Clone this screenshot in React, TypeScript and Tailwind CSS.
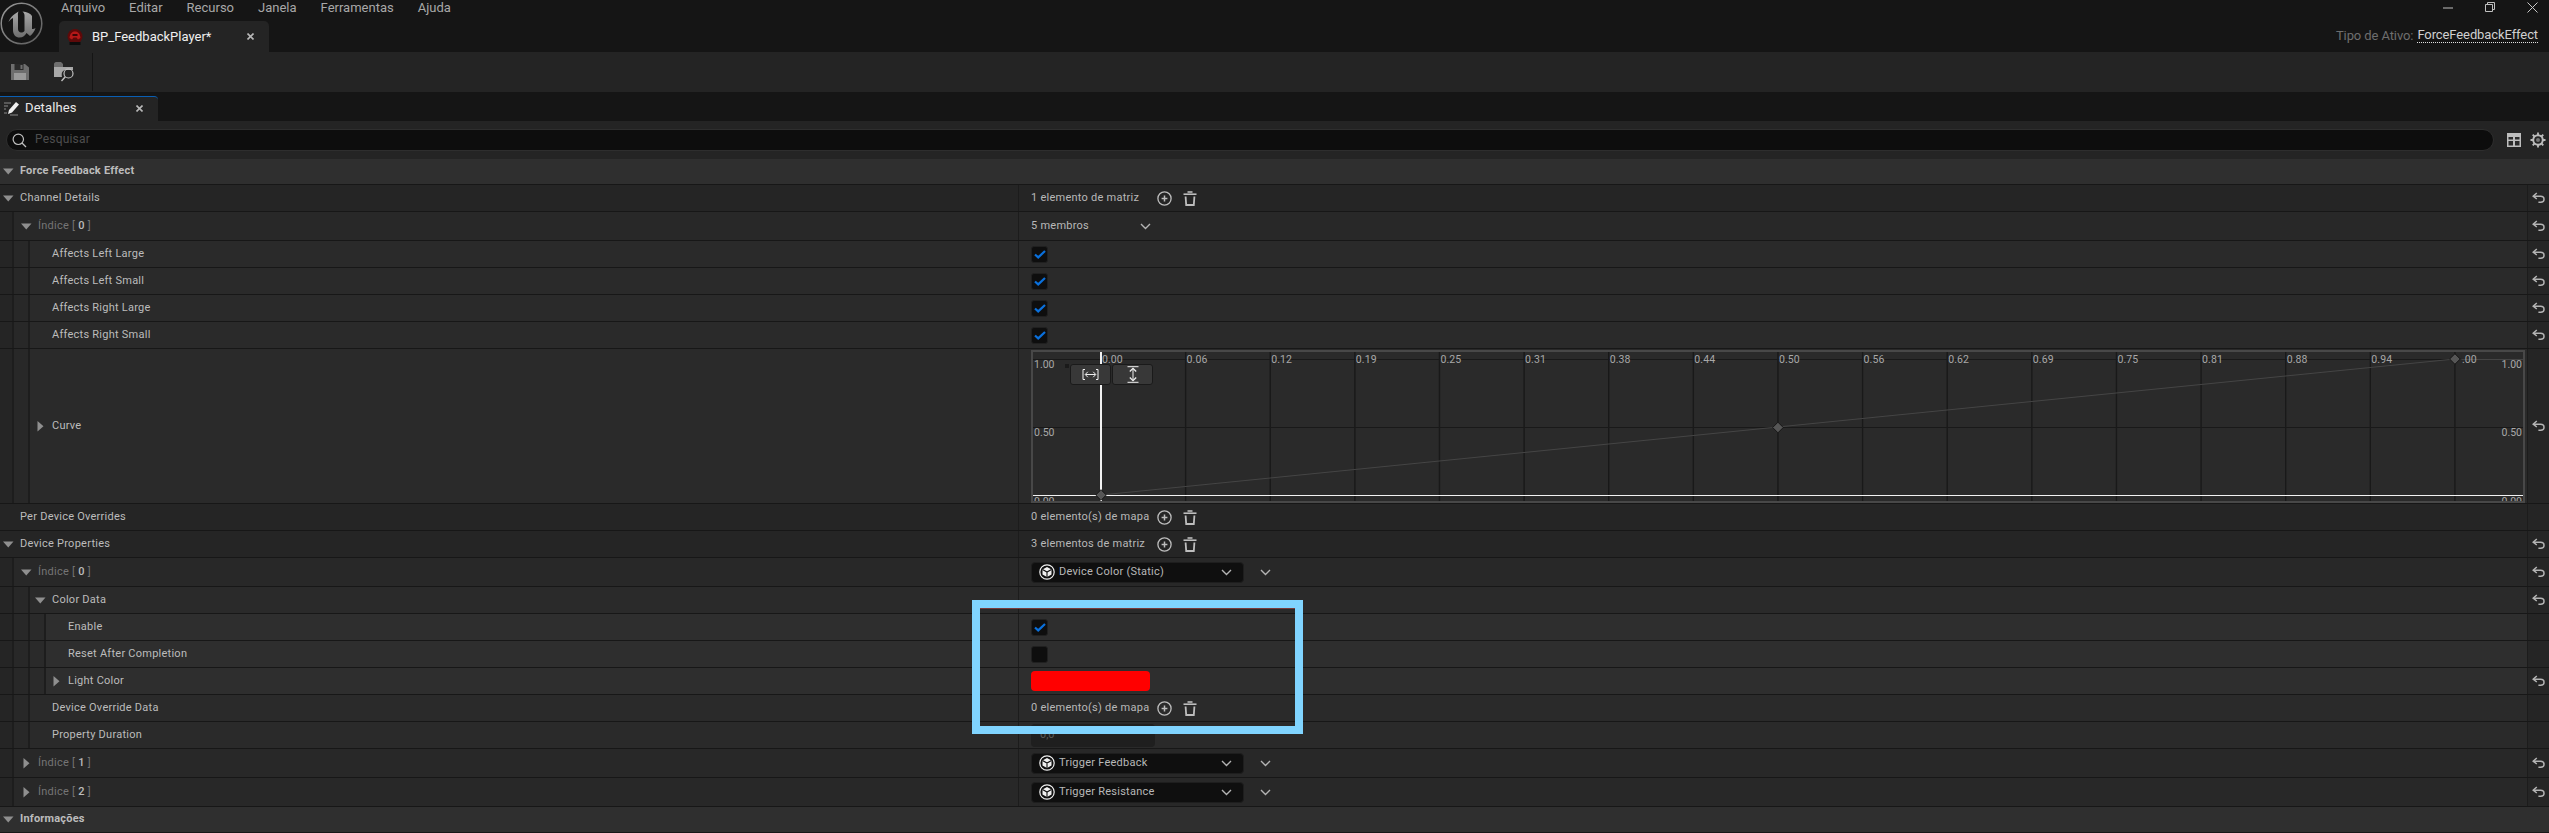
import React from "react";

const FONT = "font-['Roboto','Liberation_Sans',sans-serif]";

function Undo() {
  return (
    <svg width="13" height="12" viewBox="0 0 13 12" fill="none" stroke="#b4b4b4" strokeWidth="1.5">
      <path d="M4.8 1 L1.2 4.2 L4.8 7" />
      <path d="M1.6 4.2 H8.6 C10.6 4.2 12 5.4 12 7.2 C12 9 10.6 10.2 8.6 10.2 H6.4" />
    </svg>
  );
}
function PlusCircle() {
  return (
    <svg width="15" height="15" viewBox="0 0 15 15" fill="none" stroke="#bdbdbd">
      <circle cx="7.5" cy="7.5" r="6.6" strokeWidth="1.3" />
      <path d="M7.5 4.6 V10.4 M4.6 7.5 H10.4" strokeWidth="1.5" />
    </svg>
  );
}
function Trash() {
  return (
    <svg width="14" height="15" viewBox="0 0 14 15" fill="none" stroke="#bdbdbd" strokeWidth="1.6">
      <path d="M0.5 3.2 H13.5" />
      <path d="M4.5 1 H9.5" />
      <path d="M2.6 5.5 L3.2 14 H10.8 L11.4 5.5" strokeWidth="1.8" />
    </svg>
  );
}
function Chevron() {
  return (
    <svg width="11" height="7" viewBox="0 0 11 7" fill="none" stroke="#b4b4b4" strokeWidth="1.4">
      <path d="M1 1 L5.5 5.5 L10 1" />
    </svg>
  );
}
function TriDown() {
  return (
    <svg width="11" height="7" viewBox="0 0 11 7"><path d="M0 0.5 H10.5 L5.25 6.5 Z" fill="#8f8f8f" /></svg>
  );
}
function TriRight() {
  return (
    <svg width="7" height="11" viewBox="0 0 7 11"><path d="M0.5 0 V10.5 L6.5 5.25 Z" fill="#8f8f8f" /></svg>
  );
}
function Check({ on }: { on: boolean }) {
  return (
    <div className="w-[17px] h-[17px] rounded-[3px] bg-[#0e0e0e] border border-[#202020] flex items-center justify-center">
      {on && (
        <svg width="12" height="9" viewBox="0 0 12 9" fill="none" stroke="#0a70dc" strokeWidth="2.2">
          <path d="M1 4.5 L4.2 7.4 L11 1" />
        </svg>
      )}
    </div>
  );
}
function Count({ text }: { text: string }) {
  return (
    <div className="flex items-center h-full">
      <span className="w-[126px] text-[11px] tracking-[0.25px] text-[#b8b8b8]">{text}</span>
      <PlusCircle />
      <span className="w-[11px]" />
      <Trash />
    </div>
  );
}
function Cube() {
  return (
    <svg width="16" height="16" viewBox="0 0 16 16" fill="none" stroke="#f0f0f0">
      <circle cx="8" cy="8" r="7.2" strokeWidth="1.2" />
      <path d="M8 3 L12.5 5.4 V10.4 L8 13 L3.5 10.4 V5.4 Z" fill="#f0f0f0" stroke="none" />
      <path d="M3.5 5.4 L8 8 L12.5 5.4 M8 8 V13" stroke="#0f0f0f" strokeWidth="1.1" />
    </svg>
  );
}
function Dropdown({ text }: { text: string }) {
  return (
    <div className="flex items-center">
      <div className="w-[213px] h-[21px] rounded-[4px] bg-[#0f0f0f] border border-[#1e1e1e] flex items-center pl-[7px] pr-[11px]">
        <Cube />
        <span className="ml-[4px] flex-1 text-[11px] tracking-[0.25px] text-[#b8b8b8]">{text}</span>
        <Chevron />
      </div>
      <span className="ml-[16px]">
        <Chevron />
      </span>
    </div>
  );
}

function Curve() {
  const labels = ["0.00","0.06","0.12","0.19","0.25","0.31","0.38","0.44","0.50","0.56","0.62","0.69","0.75","0.81","0.88","0.94","1.00"];
  const x0 = 68;
  const step = 84.62;
  const L = 10.5;
  return (
    <div className="relative w-[1494px] h-[153px] border-2 border-[#484848] overflow-hidden">
      <svg width="1490" height="149" className="block">
        <g stroke="#191919">
          {labels.slice(1).map((l, i) => (
            <line key={l} x1={x0 + (i + 1) * step} y1="0" x2={x0 + (i + 1) * step} y2="149" strokeWidth="1.4" />
          ))}
          <line x1="0" y1="7.5" x2="1490" y2="7.5" />
          <line x1="0" y1="75.5" x2="1490" y2="75.5" />
        </g>
        <line x1={x0} y1="143" x2={x0 + 16 * step} y2="7" stroke="#454545" strokeWidth="1" />
        <line x1="1422" y1="7.5" x2="1490" y2="7.5" stroke="#454545" />
        <line x1="0" y1="143.5" x2="1490" y2="143.5" stroke="#f2f2f2" />
        <line x1={x0} y1="0" x2={x0} y2="149" stroke="#f2f2f2" strokeWidth="2" />
        <g fontFamily="Roboto" fontSize={L} fill="#a8a8a8">
          {labels.map((l, i) => (
            <text key={l} x={x0 + i * step + 1} y="10.5" letterSpacing="0.1">{l}</text>
          ))}
          <text x="1" y="16">1.00</text>
          <text x="1" y="84">0.50</text>
          <text x="1" y="153">0.00</text>
          <text x="1489" y="16" textAnchor="end">1.00</text>
          <text x="1489" y="84" textAnchor="end">0.50</text>
          <text x="1489" y="153" textAnchor="end">0.00</text>
        </g>
        <rect x={x0 + 16 * step + 1} y="1" width="5.5" height="11" fill="#2a2a2a" />
        {[[x0, 143], [x0 + 8 * step, 75.5], [x0 + 16 * step, 7]].map(([x, y]) => (
          <path key={x} d={`M${x} ${y - 5.3} L${x + 5.3} ${y} L${x} ${y + 5.3} L${x - 5.3} ${y} Z`} fill="#565656" stroke="#161616" strokeWidth="1" />
        ))}
        <rect x="32" y="12" width="4" height="4" fill="#1a1a1a" />
      </svg>
      <div className="absolute left-[37px] top-[12px] flex gap-[1px]">
        <div className="w-[41px] h-[21px] rounded-[3px] bg-[#383838] border border-[#1a1a1a] flex items-center justify-center">
          <svg width="17" height="11" viewBox="0 0 17 11" fill="none" stroke="#f0f0f0" strokeWidth="1">
            <path d="M3 0.5 H1 V10.5 H3 M14 0.5 H16 V10.5 H14 M3.5 5.5 H13.5 M5.8 2.8 L3.2 5.5 L5.8 8.2 M11.2 2.8 L13.8 5.5 L11.2 8.2" />
          </svg>
        </div>
        <div className="w-[41px] h-[21px] rounded-[3px] bg-[#383838] border border-[#1a1a1a] flex items-center justify-center">
          <svg width="12" height="17" viewBox="0 0 12 17" fill="none" stroke="#f0f0f0" strokeWidth="1">
            <path d="M0.5 0.7 H11.5 M0.5 16.3 H11.5 M6 2.5 V14.5" />
            <path d="M2.8 5.5 L6 2.3 L9.2 5.5 M2.8 11.5 L6 14.7 L9.2 11.5" strokeWidth="1.3" />
          </svg>
        </div>
      </div>
    </div>
  );
}

type RowDef = {
  depth: number;
  label: React.ReactNode;
  tri?: "down" | "right";
  h: number;
  value?: React.ReactNode;
  reset?: boolean;
};

const GUTTER = [14, 16, 16];
const BG = ["bg-[#252525]", "bg-[#282828]", "bg-[#2a2a2a]", "bg-[#2e2e2e]"];
const TEXT_PAD = ["pl-[20px]", "pl-[24px]", "pl-[22px]", "pl-[22px]"];
const TRI_DOWN = ["left-[3px]", "left-[7px]", "left-[5px]", "left-[5px]"];
const TRI_RIGHT = ["left-[7px]", "left-[9px]", "left-[7px]", "left-[7px]"];

const Index = ({ n }: { n: number }) => (
  <span className="text-[#757575]">
    Índice [ <span className="text-[#bcbcbc] font-medium">{n}</span> ]
  </span>
);

const rows: RowDef[] = [
  { depth: 0, label: "Channel Details", tri: "down", h: 27, value: <Count text="1 elemento de matriz" />, reset: true },
  { depth: 1, label: <Index n={0} />, tri: "down", h: 29, reset: true, value: (
    <div className="flex items-center h-full">
      <span className="w-[109px] text-[11px] tracking-[0.25px] text-[#b8b8b8]">5 membros</span>
      <Chevron />
    </div>
  ) },
  { depth: 2, label: "Affects Left Large", h: 27, value: <Check on />, reset: true },
  { depth: 2, label: "Affects Left Small", h: 27, value: <Check on />, reset: true },
  { depth: 2, label: "Affects Right Large", h: 27, value: <Check on />, reset: true },
  { depth: 2, label: "Affects Right Small", h: 27, value: <Check on />, reset: true },
  { depth: 2, label: "Curve", tri: "right", h: 155, value: <Curve />, reset: true },
  { depth: 0, label: "Per Device Overrides", h: 27, value: <Count text="0 elemento(s) de mapa" /> },
  { depth: 0, label: "Device Properties", tri: "down", h: 27, value: <Count text="3 elementos de matriz" />, reset: true },
  { depth: 1, label: <Index n={0} />, tri: "down", h: 29, value: <Dropdown text="Device Color (Static)" />, reset: true },
  { depth: 2, label: "Color Data", tri: "down", h: 27, reset: true },
  { depth: 3, label: "Enable", h: 27, value: <Check on /> },
  { depth: 3, label: "Reset After Completion", h: 27, value: <Check on={false} /> },
  { depth: 3, label: "Light Color", tri: "right", h: 27, reset: true, value: <div className="w-[119px] h-[20px] rounded-[4px] bg-[#ff0000]" /> },
  { depth: 2, label: "Device Override Data", h: 27, value: <Count text="0 elemento(s) de mapa" /> },
  { depth: 2, label: "Property Duration", h: 27, value: (
    <div className="w-[124px] h-[23px] rounded-[4px] bg-[#1f1f1f] pl-[9px] flex items-center text-[11px] text-[#5a5a5a]">0,0</div>
  ) },
  { depth: 1, label: <Index n={1} />, tri: "right", h: 29, value: <Dropdown text="Trigger Feedback" />, reset: true },
  { depth: 1, label: <Index n={2} />, tri: "right", h: 29, value: <Dropdown text="Trigger Resistance" />, reset: true },
];

function Row({ r }: { r: RowDef }) {
  const gutters = GUTTER.slice(0, r.depth);
  return (
    <div className={`flex border-b border-[#171717] ${BG[r.depth]}`} style={{ height: r.h }}>
      <div className="w-[1018px] flex shrink-0 h-full">
        {gutters.map((w, i) => (
          <div key={i} className={`shrink-0 h-full border-r-2 border-[#1d1d1d] ${BG[i]}`} style={{ width: w }} />
        ))}
        <div className={`relative flex-1 flex items-center ${TEXT_PAD[r.depth]} text-[11px] tracking-[0.25px] text-[#bcbcbc]`}>
          {r.tri && (
            <span className={`absolute flex ${r.tri === "down" ? TRI_DOWN[r.depth] : TRI_RIGHT[r.depth]}`}>
              {r.tri === "down" ? <TriDown /> : <TriRight />}
            </span>
          )}
          <span>{r.label}</span>
        </div>
      </div>
      <div className="w-[1509px] shrink-0 h-full border-l border-[#1c1c1c] pl-[12px] flex items-center">
        {r.value}
      </div>
      <div className="flex-1 h-full border-l border-[#1c1c1c] bg-[#252525] flex items-center justify-center">
        {r.reset && <Undo />}
      </div>
    </div>
  );
}

function Section({ title }: { title: string }) {
  return (
    <div className="h-[26px] bg-[#2f2f2f] border-b border-[#171717] flex items-center relative pl-[20px] text-[11px] font-bold tracking-[0.2px] text-[#bcbcbc]">
      <span className="absolute left-[3px] flex"><TriDown /></span>
      {title}
    </div>
  );
}

function UELogo() {
  return (
    <svg width="44" height="46" viewBox="0 0 44 46">
      <defs>
        <linearGradient id="uering" x1="0" y1="0" x2="1" y2="1">
          <stop offset="0%" stopColor="#9a9a9a" />
          <stop offset="100%" stopColor="#5a5a5a" />
        </linearGradient>
        <linearGradient id="ueu" x1="0" y1="0" x2="0" y2="1">
          <stop offset="0%" stopColor="#a8a8a8" />
          <stop offset="100%" stopColor="#6e6e6e" />
        </linearGradient>
      </defs>
      <circle cx="21.5" cy="23.5" r="20.3" fill="#161616" stroke="url(#uering)" strokeWidth="1.5" />
      <path
        d="M8.5 22 C10 18 12 15.5 18.5 11.5 C17.5 13.5 18 15 18 17 L18 29 C18 31 19.5 32.5 21 32.5 C22.5 32.5 23.5 32 24.5 31 L24.5 15.5 C24.5 14 24 13 22.5 11.5 C27 12 30.5 13.5 32 16 L32 29 C33.3 29.3 34.3 29 35.5 28 C34.5 31.5 32.5 34 30 36 L26.5 33 C25 35.5 23 37.5 19.5 37.5 C16 37.5 13 35 13 30 L13 18 C11 19 9.5 20.5 8.5 22 Z"
        fill="url(#ueu)"
      />
    </svg>
  );
}

function TabIcon() {
  return (
    <svg width="16" height="16" viewBox="0 0 16 16">
      <circle cx="8" cy="7.5" r="7.5" fill="#5e0909" />
      <path d="M2.5 9 C3 4 5.5 2.5 8 2.5 C10.5 2.5 13 4 13.5 9 L11 10.5 L9.5 8.5 H6.5 L5 10.5 Z" fill="#b51818" />
      <rect x="5.5" y="5" width="5" height="2" fill="#3a0505" />
      <rect x="2.5" y="13" width="11" height="3" fill="#0c0c0c" />
    </svg>
  );
}

function SaveIcon() {
  return (
    <svg width="18" height="18" viewBox="0 0 18 18">
      <path d="M0 1 H14 L18 4.5 V17 H0 Z" fill="#6e6e6e" />
      <rect x="3.5" y="1" width="9" height="6" fill="#2a2a2a" />
      <rect x="9.5" y="2" width="2" height="4" fill="#6e6e6e" />
      <rect x="3" y="10" width="12" height="7" fill="#9a9a9a" />
    </svg>
  );
}
function FolderSearch() {
  return (
    <svg width="21" height="20" viewBox="0 0 21 20" fill="none">
      <path d="M0 2 C0 1 1 0 2 0 H7 L9 2 V5 H0 Z" fill="#6e6e6e" />
      <path d="M0 5 H19 V8 H12 C9 8 7 10 8 15 H0 Z" fill="#a8a8a8" />
      <circle cx="14.5" cy="11.5" r="4.5" stroke="#c0c0c0" strokeWidth="1.2" />
      <path d="M11.3 14.8 L7.5 19" stroke="#c0c0c0" strokeWidth="1.4" />
    </svg>
  );
}
function X({ c = "#b8b8b8" }: { c?: string }) {
  return (
    <svg width="7" height="7" viewBox="0 0 7 7" stroke={c} strokeWidth="1.6"><path d="M0.5 0.5 L6.5 6.5 M6.5 0.5 L0.5 6.5" /></svg>
  );
}

export default function App() {
  return (
    <div className={`relative w-[2549px] h-[833px] overflow-hidden bg-[#151515] ${FONT}`}>
      {/* Title + tabs */}
      <div className="h-[52px] flex bg-[#151515]">
        <div className="w-[59px] shrink-0"><UELogo /></div>
        <div className="flex-1 flex flex-col">
          <div className="h-[21px] flex items-start relative">
            <div className="flex gap-[24px] ml-[2px] text-[13px] leading-[15px] text-[#a8a8a8]">
              {["Arquivo", "Editar", "Recurso", "Janela", "Ferramentas", "Ajuda"].map((m) => (
                <span key={m}>{m}</span>
              ))}
            </div>
            <div className="ml-auto flex items-start">
              <svg width="10" height="2" viewBox="0 0 10 2" className="mt-[7px] mr-[32px]"><path d="M0 1 H10" stroke="#c0c0c0" /></svg>
              <svg width="10" height="10" viewBox="0 0 10 10" fill="none" stroke="#c0c0c0" className="mt-[2px] mr-[32px]"><path d="M0.5 2.5 H7.5 V9.5 H0.5 Z M2.5 2.5 V0.5 H9.5 V7.5 H7.5" /></svg>
              <svg width="11" height="11" viewBox="0 0 11 11" stroke="#c8c8c8" className="mt-[2px] mr-[11px]"><path d="M0.5 0.5 L10.5 10.5 M10.5 0.5 L0.5 10.5" /></svg>
            </div>
          </div>
          <div className="flex-1 flex items-stretch">
            <div className="w-[210px] bg-[#242424] rounded-t-[5px] flex items-center pl-[8px]">
              <TabIcon />
              <span className="ml-[9px] text-[13px] text-[#f0f0f0]">BP_FeedbackPlayer*</span>
              <span className="ml-auto mr-[15px] flex"><X /></span>
            </div>
            <div className="ml-auto mr-[11px] flex items-center text-[13px] tracking-[-0.1px] pb-[2px]">
              <span className="text-[#6e6e6e]">Tipo de Ativo:</span>
              <span className="ml-[4px] text-[#d0d0d0] border-b border-dotted border-[#e0e0e0] leading-[14px]">ForceFeedbackEffect</span>
            </div>
          </div>
        </div>
      </div>
      {/* Toolbar */}
      <div className="h-[40px] bg-[#242424] flex items-center">
        <span className="ml-[11px] flex"><SaveIcon /></span>
        <span className="ml-[25px] flex"><FolderSearch /></span>
        <span className="ml-[17px] w-[1px] h-[38px] bg-[#151515]" />
      </div>
      {/* Panel tab */}
      <div className="h-[29px] bg-[#151515] flex items-end">
        <div className="w-[158px] h-[25px] bg-[#242424] rounded-tr-[4px] border-t border-[#0a5fb4] flex items-center pl-[3px] pb-[2px]">
          <svg width="16" height="15" viewBox="0 0 16 15">
            <path d="M6 9 L13 1 L16 3.5 L9 11.5 L5 13 Z" fill="#f0f0f0" />
            <path d="M1 2 H8 M1 5 H5 M1 8 H3 M1 12 H4 M7 14 H15" stroke="#8a8a8a" strokeWidth="1" />
          </svg>
          <span className="ml-[6px] text-[13px] tracking-[0.1px] text-[#e8e8e8]">Detalhes</span>
          <span className="ml-auto mr-[15px] flex"><X /></span>
        </div>
      </div>
      {/* Search */}
      <div className="h-[38px] bg-[#242424] flex items-center">
        <div className="ml-[6px] w-[2488px] h-[22px] rounded-[11px] bg-[#0d0d0d] border border-[#2e2e2e] flex items-center pl-[5px]">
          <svg width="15" height="15" viewBox="0 0 15 15" fill="none" stroke="#c0c0c0" strokeWidth="1.2">
            <circle cx="6.3" cy="6.3" r="5.2" /><path d="M10 10 L14 14" />
          </svg>
          <span className="ml-[8px] text-[12px] tracking-[0.2px] text-[#4e4e4e] pb-[2px]">Pesquisar</span>
        </div>
        <svg width="14" height="14" viewBox="0 0 14 14" className="ml-[13px]">
          <path d="M0 0 H14 V14 H0 Z" fill="#bdbdbd" />
          <path d="M1.5 4 H12.5 V6.5 H8 V4 H6 V6.5 H1.5 Z M1.5 8 H6 V12.5 H1.5 Z M8 8 H12.5 V12.5 H8 Z" fill="#2a2a2a" fillRule="evenodd" />
        </svg>
        <svg width="16" height="16" viewBox="0 0 16 16" className="ml-[9px]" fill="none">
          <circle cx="8" cy="8" r="4.8" stroke="#bdbdbd" strokeWidth="2" />
          <circle cx="8" cy="8" r="2" fill="#777" />
          <path d="M8 0.5 V3 M8 13 V15.5 M0.5 8 H3 M13 8 H15.5 M2.7 2.7 L4.5 4.5 M11.5 11.5 L13.3 13.3 M13.3 2.7 L11.5 4.5 M4.5 11.5 L2.7 13.3" stroke="#bdbdbd" strokeWidth="1.8" />
        </svg>
      </div>
      {/* Content */}
      <Section title="Force Feedback Effect" />
      {rows.map((r, i) => (
        <Row key={i} r={r} />
      ))}
      <Section title="Informações" />
      {/* annotation overlay */}
      <div className="absolute left-[972px] top-[600px] w-[331px] h-[134px] border-[8px] border-[#80d4ff]">
        <div className="h-[1px] bg-[#7a3a3a]" />
      </div>
    </div>
  );
}
